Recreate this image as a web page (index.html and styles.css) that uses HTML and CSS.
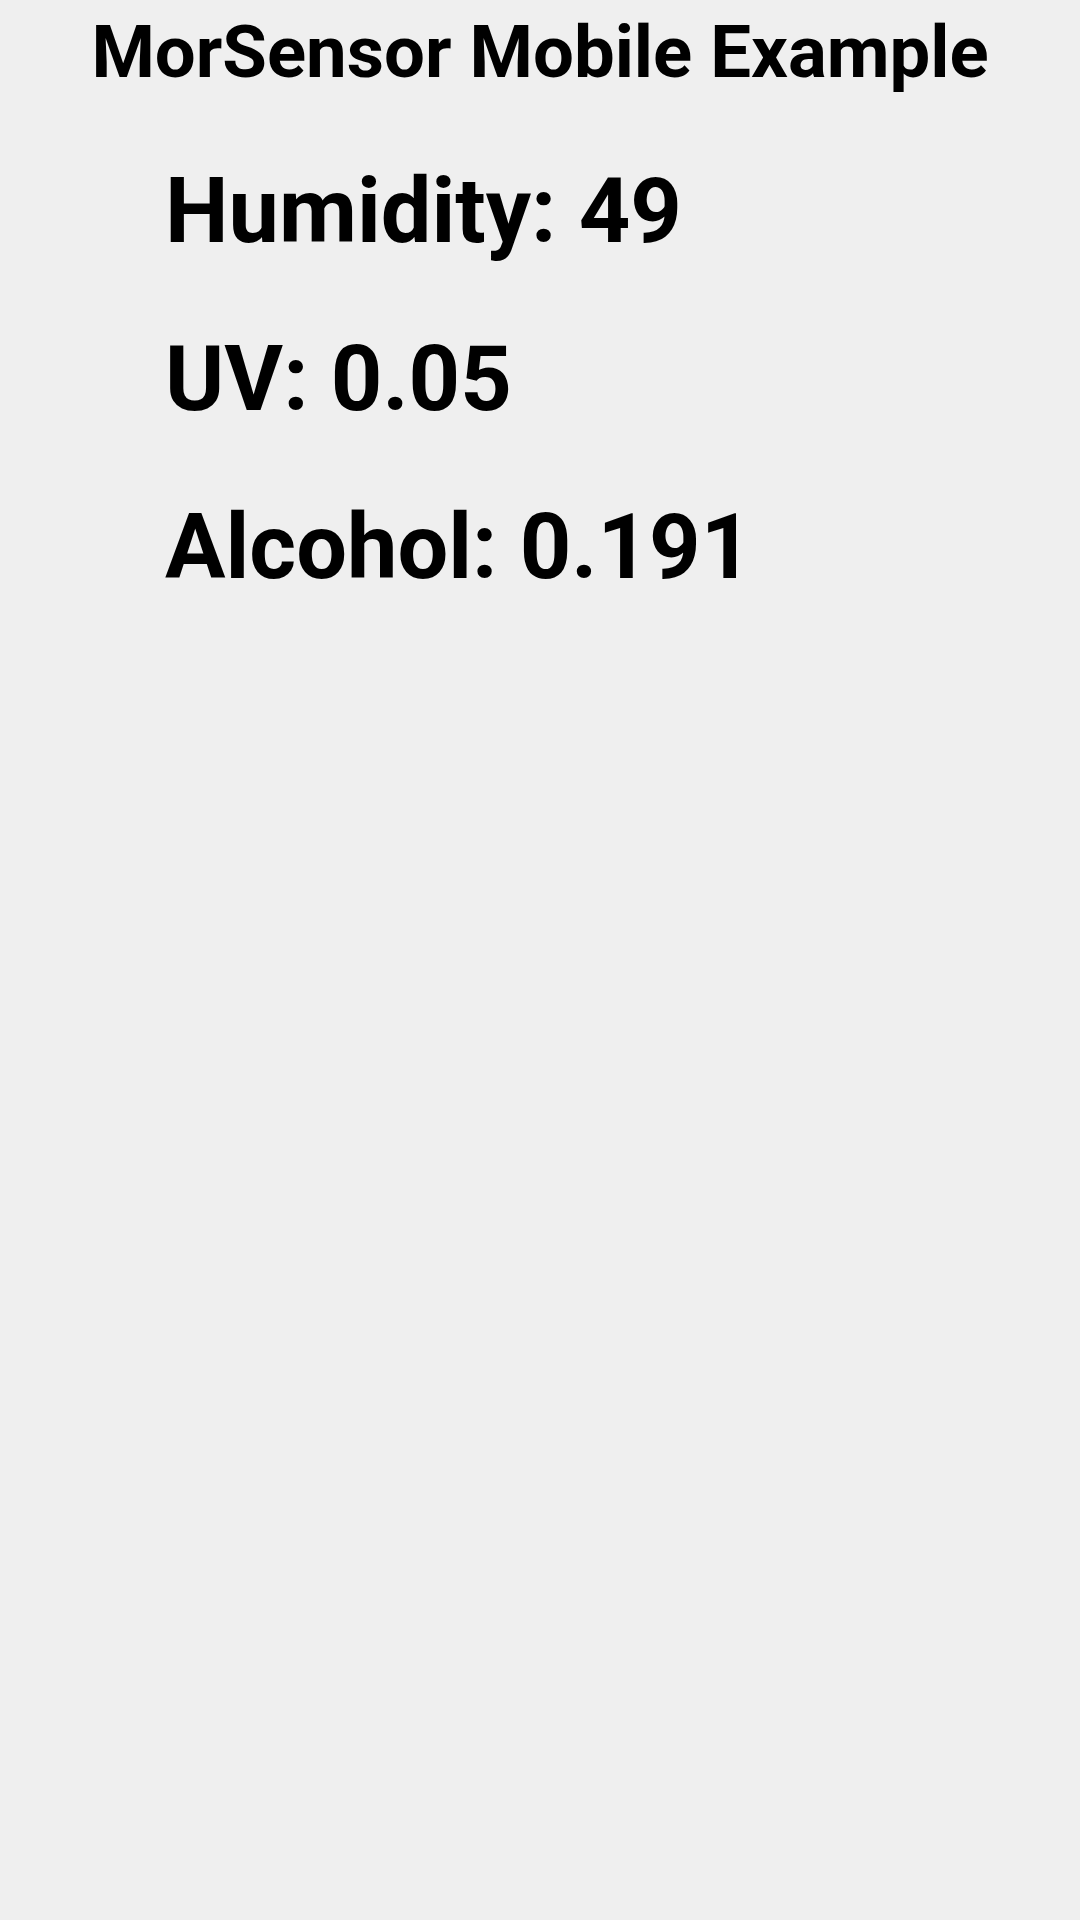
FILE: index.html
```html
<!DOCTYPE html>
<html>
<head>
<meta charset="utf-8">
<link rel="stylesheet" href="styles.css">
</head>
<body>
<div class="screen">
  <h1 class="title">MorSensor Mobile Example</h1>
  <div class="readings">
    <div class="reading">Humidity: 49</div>
    <div class="reading">UV: 0.05</div>
    <div class="reading">Alcohol: 0.191</div>
  </div>
</div>
</body>
</html>
```

FILE: styles.css
```css
html, body {
  margin: 0;
  padding: 0;
  background: #efefef;
}
.screen {
  width: 1080px;
  height: 1920px;
  display: flex;
  flex-direction: column;
  font-family: Roboto, "Noto Sans", sans-serif;
  color: #000;
}
.title {
  margin: 10px 0 0 0;
  font-size: 72.5px;
  font-weight: 700;
  line-height: normal;
  text-align: center;
}
.readings {
  display: flex;
  flex-direction: column;
  gap: 63px;
  padding: 64px 0 0 165px;
}
.reading {
  font-size: 90px;
  font-weight: 700;
  line-height: normal;
}
```
